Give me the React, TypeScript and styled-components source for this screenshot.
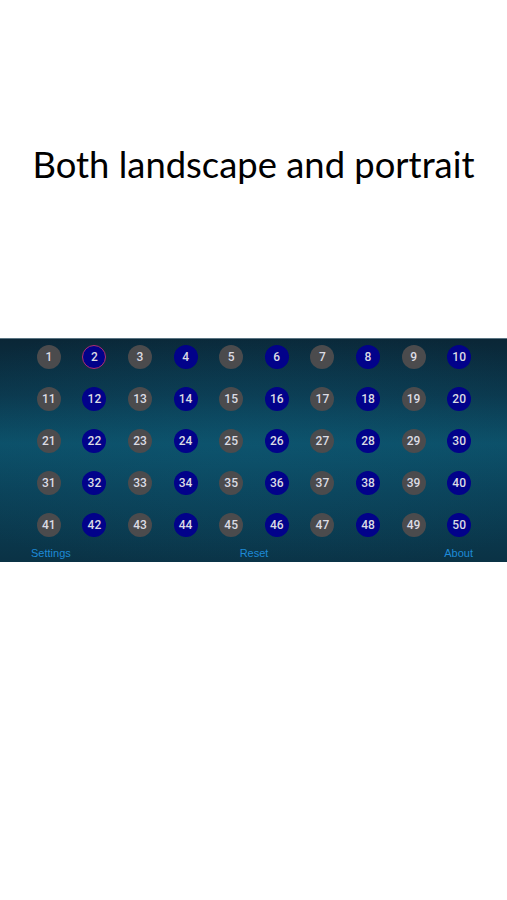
import React, { FC } from 'react';
import styled, { createGlobalStyle } from 'styled-components';

const GlobalStyle = createGlobalStyle`
    html, body {
        margin: 0;
        padding: 0;
        background: #ffffff;
    }
    body {
        font-family: "Liberation Sans", Arial, sans-serif;
    }
`;

const Page = styled.div`
    width: 507px;
    height: 900px;
    display: flex;
    flex-direction: column;
`;

const Caption = styled.h1`
    margin: 0;
    height: 338px;
    padding-top: 139px;
    box-sizing: border-box;
    font-family: Lato, "Open Sans", sans-serif;
    font-weight: 400;
    font-size: 36.4px;
    line-height: 50px;
    text-align: center;
    color: #000000;
`;

const Board = styled.div`
    height: 224px;
    box-sizing: border-box;
    padding-top: 6px;
    border-top: 1px solid #5a7482;
    background:
        radial-gradient(ellipse 70% 60% at 50% 48%, rgba(14, 90, 118, 0.35) 0%, rgba(14, 90, 118, 0) 100%),
        linear-gradient(
            180deg,
            #0a2636 0%,
            #0b374c 25%,
            #0c5069 47%,
            #0b4259 68%,
            #0a3245 100%
        );
    display: flex;
    flex-direction: column;
`;

const Grid = styled.div`
    display: grid;
    grid-template-columns: repeat(10, 1fr);
    grid-auto-rows: 24px;
    row-gap: 18px;
    padding: 0 25px 0 26px;
`;

const Cell = styled.div`
    display: flex;
    justify-content: center;
    align-items: center;
`;

const Ball = styled.div<{ $blue: boolean; $current?: boolean }>`
    width: 24px;
    height: 24px;
    box-sizing: border-box;
    border-radius: 50%;
    display: flex;
    justify-content: center;
    align-items: center;
    background: ${p => (p.$blue ? '#02028a' : '#4b4b4d')};
    border: ${p => (p.$current ? '1px solid #b0306e' : 'none')};
    color: #dcdce4;
    font-family: Roboto, "Liberation Sans", sans-serif;
    font-size: 12px;
    font-weight: 500;
`;

const Footer = styled.div`
    display: grid;
    grid-template-columns: 1fr auto 1fr;
    align-items: center;
    padding: 0 34px 0 31px;
    margin-top: 9px;
`;

const Link = styled.span<{ $align: 'start' | 'center' | 'end' }>`
    justify-self: ${p => p.$align};
    padding-left: ${p => (p.$align === 'center' ? '4px' : '0')};
    font-size: 11px;
    line-height: 14px;
    color: #1e8ad6;
`;

const numbers = Array.from({ length: 50 }, (_, i) => i + 1);

const App: FC = () => {
    return (
        <Page>
            <GlobalStyle />
            <Caption>Both landscape and portrait</Caption>
            <Board>
                <Grid>
                    {numbers.map(n => (
                        <Cell key={n}>
                            <Ball $blue={n % 2 === 0} $current={n === 2}>
                                {n}
                            </Ball>
                        </Cell>
                    ))}
                </Grid>
                <Footer>
                    <Link $align="start">Settings</Link>
                    <Link $align="center">Reset</Link>
                    <Link $align="end">About</Link>
                </Footer>
            </Board>
        </Page>
    );
};

export default App;
